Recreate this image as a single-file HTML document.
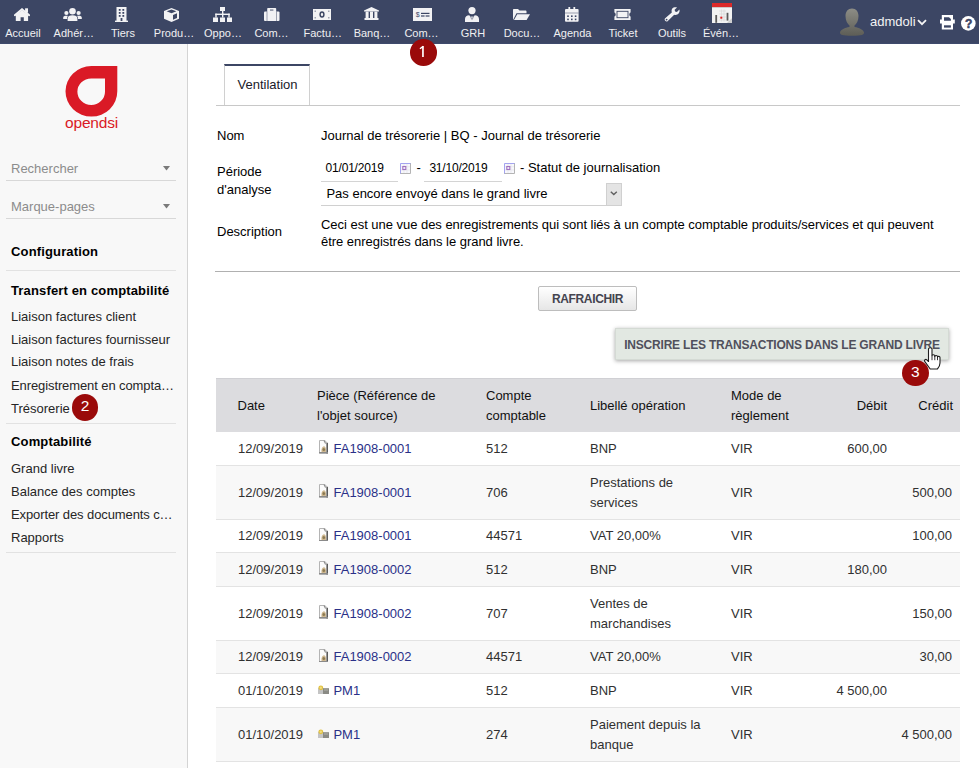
<!DOCTYPE html>
<html><head><meta charset="utf-8">
<style>
*{box-sizing:border-box;margin:0;padding:0}
html,body{width:979px;height:768px;overflow:hidden;background:#fff;font-family:"Liberation Sans",sans-serif;font-size:13px;color:#000}
.abs{position:absolute}
#top{position:absolute;left:0;top:0;width:979px;height:44px;background:#3c4664}
#side{position:absolute;left:0;top:44px;width:188px;height:724px;background:#f8f8f8;border-right:1px solid #d4d4d4}
.sl{position:absolute;left:11px;white-space:nowrap;line-height:16px;color:#262626}
.sb{font-weight:bold;color:#000;letter-spacing:0.15px}
.hr{position:absolute;left:6px;width:170px;height:1px;background:#e2e2e2}
.badge{position:absolute;width:26.5px;height:26.5px;border-radius:50%;background:#9a0a0a;color:#fff;font-size:15.5px;text-align:center;line-height:27px}
.lab{position:absolute;white-space:nowrap}
table.lst{position:absolute;left:216px;top:378px;width:744px;border-collapse:separate;border-spacing:0;table-layout:fixed}
table.lst th{background:#dcdcdf;box-shadow:inset 0 1px 0 #d0d0d4;font-weight:normal;text-align:left;line-height:20px;padding:8px 0 6px 8px;vertical-align:middle;color:#111}
table.lst td{line-height:20px;padding:6px 0 6px 8px;vertical-align:middle;border-bottom:1px solid #e3e3e3;color:#303030;white-space:nowrap}
table.lst tr.i td{background:#f8f8f8}
table.lst td.r,table.lst th.r{text-align:right;padding-left:0;padding-right:8px}
a{color:#2a3088;text-decoration:none}
.ico{display:inline-block;vertical-align:-1px;margin-right:5px}

.tml{position:absolute;top:27px;width:60px;text-align:center;color:#f0f0f2;font-size:11px;line-height:13px;white-space:nowrap}
.sg{color:#8c8c8c}
.btn{background:linear-gradient(#fff,#e6e6e6);border:1px solid #bdbdbd;border-radius:2px;font-weight:bold;font-size:12px;color:#44444f;text-align:center;line-height:25px;letter-spacing:-0.35px}
.btn2{background:#e2e8e2;border:1px solid #d4dad4;box-shadow:0 1px 4px rgba(0,0,0,0.35);font-weight:bold;font-size:12px;color:#50505c;text-align:center;line-height:32.5px;letter-spacing:-0.2px}

</style></head><body>
<div id="top"></div><div class="abs" style="left:0;top:43px;width:979px;height:1px;background:#3e4a6c"></div>
<div id="side"></div>
<div class="abs" style="left:14.0px;top:7.8px;line-height:0"><svg width="16" height="13" viewBox="0 0 16 13"><path d="M0.8 7.2 L8 1.2 L15.2 7.2" fill="none" stroke="#f2f2f4" stroke-width="1.9" stroke-linecap="round"/><rect x="11.1" y="0.3" width="2.9" height="4.4" fill="#f2f2f4"/><path d="M1.8 6.8 L8 2.3 L14.1 6.8 V13 H9.8 V9.2 H6.6 V13 H1.8 Z" fill="#f2f2f4"/></svg></div>
<div class="tml" style="left:-7.0px">Accueil</div>
<div class="abs" style="left:62.8px;top:8.2px;line-height:0"><svg width="19" height="13" viewBox="0 0 19 13"><circle cx="9.5" cy="3.3" r="3.3" fill="#f2f2f4"/><path d="M4.6 13 V10.4 C4.6 8 6.5 7.2 9.5 7.2 C12.5 7.2 14.4 8 14.4 10.4 V13 Z" fill="#f2f2f4"/><circle cx="3.4" cy="5" r="2.1" fill="#f2f2f4"/><path d="M0.2 11 V9.8 C0.2 8.4 1.4 7.8 3.4 7.8 C4.2 7.8 4.6 7.9 5 8 C4.2 8.8 4 9.6 4 10.5 V11 Z" fill="#f2f2f4"/><circle cx="15.6" cy="5" r="2.1" fill="#f2f2f4"/><path d="M18.8 11 V9.8 C18.8 8.4 17.6 7.8 15.6 7.8 C14.8 7.8 14.4 7.9 14 8 C14.8 8.8 15 9.6 15 10.5 V11 Z" fill="#f2f2f4"/></svg></div>
<div class="tml" style="left:43.8px">Adhér…</div>
<div class="abs" style="left:115.2px;top:6.9px;line-height:0"><svg width="13" height="15" viewBox="0 0 13 15"><rect x="1.5" y="0" width="10" height="14" fill="#f2f2f4"/><rect x="0" y="13.6" width="13" height="1.4" fill="#f2f2f4"/><g fill="#3c4664"><rect x="3.8" y="2" width="1.8" height="1.8"/><rect x="7.4" y="2" width="1.8" height="1.8"/><rect x="3.8" y="5" width="1.8" height="1.8"/><rect x="7.4" y="5" width="1.8" height="1.8"/><rect x="3.8" y="8" width="1.8" height="1.8"/><rect x="7.4" y="8" width="1.8" height="1.8"/><rect x="5.6" y="11" width="1.8" height="3"/></g></svg></div>
<div class="tml" style="left:93.0px">Tiers</div>
<div class="abs" style="left:164.4px;top:7.8px;line-height:0"><svg width="15" height="14" viewBox="0 0 15 14"><path d="M7.5 0 L15 3 V10.8 L7.5 14 L0 10.8 V3 Z" fill="#f2f2f4"/><path d="M2.6 3.3 L7.5 1.5 L12.4 3.3 L7.5 5.2 Z" fill="#3c4664"/><path d="M9 7 L13 5.3 V10 L9 11.8 Z" fill="#3c4664"/></svg></div>
<div class="tml" style="left:144.0px">Produ…</div>
<div class="abs" style="left:212.8px;top:6.9px;line-height:0"><svg width="19" height="15" viewBox="0 0 19 15"><rect x="7" y="0" width="5" height="4" fill="#f2f2f4"/><rect x="9" y="4" width="1.4" height="3" fill="#f2f2f4"/><rect x="2.3" y="6.6" width="14.4" height="1.4" fill="#f2f2f4"/><rect x="2.3" y="6.6" width="1.4" height="4" fill="#f2f2f4"/><rect x="15.3" y="6.6" width="1.4" height="4" fill="#f2f2f4"/><rect x="9" y="6.6" width="1.4" height="4" fill="#f2f2f4"/><rect x="0" y="10.5" width="5" height="4.5" fill="#f2f2f4"/><rect x="7" y="10.5" width="5" height="4.5" fill="#f2f2f4"/><rect x="14" y="10.5" width="5" height="4.5" fill="#f2f2f4"/></svg></div>
<div class="tml" style="left:193.0px">Oppo…</div>
<div class="abs" style="left:264.0px;top:7.8px;line-height:0"><svg width="16" height="13" viewBox="0 0 16 13"><rect x="0" y="3.5" width="15.5" height="9.5" rx="1" fill="#f2f2f4"/><rect x="3.2" y="0" width="9" height="13" rx="0.8" fill="#f2f2f4"/><rect x="6" y="1.6" width="3.4" height="0.9" fill="#3c4664"/><rect x="2.6" y="3.5" width="0.8" height="9.5" fill="#3c4664" opacity="0.6"/><rect x="12.1" y="3.5" width="0.8" height="9.5" fill="#3c4664" opacity="0.6"/></svg></div>
<div class="tml" style="left:241.5px">Com…</div>
<div class="abs" style="left:312.8px;top:9.0px;line-height:0"><svg width="18" height="11" viewBox="0 0 18 11"><rect x="0" y="0" width="18" height="11" fill="#f2f2f4"/><ellipse cx="9" cy="5.5" rx="2.6" ry="3.2" fill="#3c4664"/><ellipse cx="9" cy="5.5" rx="1.1" ry="1.7" fill="#f2f2f4"/><rect x="1.6" y="1.6" width="1.2" height="1.2" fill="#3c4664" opacity="0.7"/><rect x="15.2" y="1.6" width="1.2" height="1.2" fill="#3c4664" opacity="0.7"/><rect x="1.6" y="8.2" width="1.2" height="1.2" fill="#3c4664" opacity="0.7"/><rect x="15.2" y="8.2" width="1.2" height="1.2" fill="#3c4664" opacity="0.7"/></svg></div>
<div class="tml" style="left:292.8px">Factu…</div>
<div class="abs" style="left:364.2px;top:7.4px;line-height:0"><svg width="15" height="13" viewBox="0 0 15 13"><path d="M0 3.6 L7.5 0 L15 3.6 V4.6 H0 Z" fill="#f2f2f4"/><rect x="1.6" y="4.6" width="3" height="7" fill="#f2f2f4"/><rect x="6" y="4.6" width="3" height="7" fill="#f2f2f4"/><rect x="10.4" y="4.6" width="3" height="7" fill="#f2f2f4"/><rect x="0.5" y="11" width="14" height="2" fill="#f2f2f4"/></svg></div>
<div class="tml" style="left:342.0px">Banq…</div>
<div class="abs" style="left:412.5px;top:7.8px;line-height:0"><svg width="19" height="13" viewBox="0 0 19 13"><rect x="0" y="0" width="19" height="13" fill="#f2f2f4"/><text x="4.6" y="9.2" font-size="7" text-anchor="middle" fill="#3c4664" font-family="Liberation Sans">$</text><rect x="8" y="4.8" width="8.5" height="1.2" fill="#3c4664"/><rect x="8" y="7.4" width="3.6" height="1.2" fill="#3c4664"/><rect x="12.6" y="7.4" width="3.9" height="1.2" fill="#3c4664"/></svg></div>
<div class="tml" style="left:391.5px">Com…</div>
<div class="abs" style="left:465.0px;top:6.9px;line-height:0"><svg width="14" height="15" viewBox="0 0 14 15"><circle cx="7" cy="3.6" r="3.6" fill="#f2f2f4"/><path d="M0 15 V12 C0 9.6 1.8 8.2 4.2 8.2 L7 11 L9.8 8.2 C12.2 8.2 14 9.6 14 12 V15 Z" fill="#f2f2f4"/><path d="M6.2 9.4 H7.8 L8.3 15 H5.7 Z" fill="#f2f2f4"/><path d="M4.6 8.6 L6.6 13.2 L7 11 Z M9.4 8.6 L7.4 13.2 L7 11 Z" fill="#3c4664" opacity="0.5"/></svg></div>
<div class="tml" style="left:443.0px">GRH</div>
<div class="abs" style="left:513.4px;top:9.0px;line-height:0"><svg width="17" height="11" viewBox="0 0 17 11"><path d="M0 11 V1 C0 0.4 0.4 0 1 0 H5 L6.5 1.6 H12.5 C13.1 1.6 13.5 2 13.5 2.6 V4.2 H3.5 L0 11 Z" fill="#f2f2f4"/><path d="M1 11 L4.2 5.2 H17 L13.6 11 Z" fill="#f2f2f4"/></svg></div>
<div class="tml" style="left:492.0px">Docu…</div>
<div class="abs" style="left:564.7px;top:7.0px;line-height:0"><svg width="14" height="15" viewBox="0 0 14 15"><rect x="0" y="2" width="13.6" height="12.8" rx="1" fill="#f2f2f4"/><rect x="3.4" y="0" width="1.8" height="3" fill="#f2f2f4"/><rect x="8.4" y="0" width="1.8" height="3" fill="#f2f2f4"/><rect x="0" y="5.6" width="13.6" height="0.8" fill="#3c4664" opacity="0.6"/><g fill="#3c4664"><rect x="2.2" y="8.4" width="1.6" height="1.6"/><rect x="6" y="8.4" width="1.6" height="1.6"/><rect x="9.8" y="8.4" width="1.6" height="1.6"/><rect x="2.2" y="11.6" width="1.6" height="1.6"/><rect x="6" y="11.6" width="1.6" height="1.6"/><rect x="9.8" y="11.6" width="1.6" height="1.6"/></g></svg></div>
<div class="tml" style="left:542.5px">Agenda</div>
<div class="abs" style="left:613.5px;top:9.0px;line-height:0"><svg width="17" height="11" viewBox="0 0 17 11"><path d="M0.4 0 H16.6 V3.4 C15.8 3.6 15.3 4.5 15.3 5.5 C15.3 6.5 15.8 7.4 16.6 7.6 V11 H0.4 V7.6 C1.2 7.4 1.7 6.5 1.7 5.5 C1.7 4.5 1.2 3.6 0.4 3.4 Z" fill="#f2f2f4"/><rect x="3" y="2.3" width="11" height="6.4" fill="none" stroke="#3c4664" stroke-width="0.9"/></svg></div>
<div class="tml" style="left:593.0px">Ticket</div>
<div class="abs" style="left:663.9px;top:6.9px;line-height:0"><svg width="16" height="15" viewBox="0 0 16 15"><path d="M1.2 13.8 C0.4 13 0.5 12 1.2 11.3 L7.8 5.4 C7.2 3.4 7.8 1.5 9.6 0.6 C10.7 0.1 11.9 0 13 0.4 L10.6 2.8 L11.1 4.6 L12.9 5.1 L15.4 2.6 C15.8 3.8 15.6 5.2 14.8 6.3 C13.7 7.8 11.8 8.3 10.2 7.8 L3.8 14 C3 14.8 2 14.6 1.2 13.8 Z" fill="#f2f2f4"/><circle cx="2.6" cy="12.6" r="0.9" fill="#3c4664"/></svg></div>
<div class="tml" style="left:642.0px">Outils</div>
<div class="abs" style="left:712.0px;top:3.0px;line-height:0"><svg width="20" height="20" viewBox="0 0 20 20"><rect x="0" y="0" width="20" height="20" fill="#f2f2f2"/><rect x="0" y="0" width="20" height="4.2" fill="#dc2a2a"/><rect x="0" y="4.2" width="20" height="0.8" fill="#c8c8c8"/><path d="M7 8 H14 M7 11 H14 M7 14 H14 M7 17 H14 M9.5 6.5 V18.5 M12 6.5 V18.5" stroke="#dadada" stroke-width="0.7"/><rect x="3.3" y="12" width="1.8" height="7.8" fill="#5a5a5a"/><rect x="14.6" y="9.8" width="1.8" height="7.8" fill="#5a5a5a"/><rect x="8.3" y="13.7" width="2" height="2" fill="#e02020"/><path d="M15.5 20 L20 15.5 V20 Z" fill="#d0d0d0"/><path d="M15.5 20 L20 15.5" stroke="#bbb" stroke-width="0.6"/></svg></div>
<div class="tml" style="left:691.0px">Évén…</div>
<svg class="abs" style="left:839px;top:8px" width="26" height="28" viewBox="0 0 26 28"><defs><linearGradient id="av" x1="0" y1="0" x2="0" y2="1"><stop offset="0" stop-color="#8d8d86"/><stop offset="1" stop-color="#5d5d56"/></linearGradient></defs><path d="M13 0.5 C17 0.5 19.5 3.5 19.5 8 C19.5 12.5 17.5 16 15.5 17.5 L15.5 19 C20 19.8 24.5 21.5 25 24.5 C25.3 26.5 23 27.8 13 27.8 C3 27.8 0.7 26.5 1 24.5 C1.5 21.5 6 19.8 10.5 19 L10.5 17.5 C8.5 16 6.5 12.5 6.5 8 C6.5 3.5 9 0.5 13 0.5 Z" fill="url(#av)"/></svg>
<div class="abs" style="left:870px;top:14px;color:#f4f4f4;font-size:13px;line-height:16px">admdoli</div>
<svg class="abs" style="left:917px;top:19px" width="10" height="7" viewBox="0 0 10 7"><path d="M1 1.2 L5 5.2 L9 1.2" fill="none" stroke="#f4f4f4" stroke-width="1.8"/></svg>
<svg class="abs" style="left:940px;top:15.2px" width="15" height="15" viewBox="0 0 15 15"><path d="M1.8 0 H13 V4.5 H14.8 V8.6 H13 V14.6 H1.8 V8.6 H0 V4.5 H1.8 Z" fill="#fff"/><path d="M4 2.2 H9 L10.9 4 V5.8 H4 Z" fill="#3c4664"/><rect x="4" y="10.3" width="6.9" height="2.3" fill="#3c4664"/></svg>
<svg class="abs" style="left:960.8px;top:16.1px" width="15" height="15" viewBox="0 0 15 15"><circle cx="7.3" cy="7.4" r="7.3" fill="#fff"/><text x="7.6" y="11.9" font-size="12" font-weight="bold" text-anchor="middle" fill="#3c4664" stroke="#3c4664" stroke-width="0.5" font-family="Liberation Sans">?</text></svg>

<div class="sl sg" style="top:160.8px">Rechercher</div>
<div class="sl sg" style="top:198.5px">Marque-pages</div>
<div class="sl sb" style="top:244.0px">Configuration</div>
<div class="sl sb" style="top:282.5px">Transfert en comptabilité</div>
<div class="sl" style="top:308.5px">Liaison factures client</div>
<div class="sl" style="top:332.0px">Liaison factures fournisseur</div>
<div class="sl" style="top:354.3px">Liaison notes de frais</div>
<div class="sl" style="top:378.2px;letter-spacing:-0.1px">Enregistrement en compta…</div>
<div class="sl" style="top:401.2px">Trésorerie</div>
<div class="sl sb" style="top:434.0px">Comptabilité</div>
<div class="sl" style="top:460.9px">Grand livre</div>
<div class="sl" style="top:483.8px">Balance des comptes</div>
<div class="sl" style="top:506.5px;letter-spacing:-0.1px">Exporter des documents c…</div>
<div class="sl" style="top:530.1px">Rapports</div>
<div class="hr" style="top:180px;background:#d8d8d8"></div>
<div class="hr" style="top:218px;background:#d8d8d8"></div>
<div class="hr" style="top:270px"></div>
<div class="hr" style="top:423px"></div>
<div class="hr" style="top:552px"></div>
<svg class="abs" style="left:162.7px;top:166px" width="7" height="5" viewBox="0 0 7 5"><path d="M0 0 H7 L3.5 4.6 Z" fill="#7a7a7a"/></svg>
<svg class="abs" style="left:162.7px;top:204.2px" width="7" height="5" viewBox="0 0 7 5"><path d="M0 0 H7 L3.5 4.6 Z" fill="#7a7a7a"/></svg><svg class="abs" style="left:60px;top:60px" width="64" height="76" viewBox="60 60 64 76"><path fill-rule="evenodd" fill="#da1a26" d="M117.3 66 V91.2 A25.9 25.3 0 1 1 91.4 66 Z M105 78.4 V91.7 A13.8 13.3 0 1 1 91.2 78.4 Z"/></svg>
<div class="abs" style="left:64px;top:114.3px;width:55px;text-align:center;color:#da1a26;font-size:15.5px;line-height:18px;letter-spacing:-0.2px">opendsi</div>

<div class="abs" style="left:224px;top:63.5px;width:86px;height:42px;border:1px solid #d0d0d0;border-top:2px solid #3c4664;border-bottom:none;background:#fff"></div>
<div class="abs" style="left:216px;top:105px;width:744px;height:1px;background:#c8c8c8"></div>
<div class="abs" style="left:237.5px;top:76.5px;line-height:16px;color:#1a1a2a">Ventilation</div>
<div class="lab" style="left:217px;top:127.5px;line-height:16px">Nom</div>
<div class="lab" style="left:321px;top:127.5px;line-height:16px">Journal de trésorerie | BQ - Journal de trésorerie</div>
<div class="lab" style="left:217px;top:162.7px;line-height:18px">Période<br>d'analyse</div>
<div class="lab" style="left:325.6px;top:160.5px;line-height:15px;font-size:12px;letter-spacing:-0.2px">01/01/2019</div>
<div class="abs" style="left:321px;top:181px;width:77px;height:1px;background:#d4d4d4"></div>
<div class="abs" style="left:400px;top:163px;line-height:0"><svg width="11" height="11" viewBox="0 0 11 11"><rect x="0" y="0" width="11" height="11" fill="#f8f8fc"/><path d="M0.5 11 V0.5 H11" fill="none" stroke="#a4a4f0" stroke-width="1"/><path d="M0.5 10.5 H10.5 V0.5" fill="none" stroke="#b4b4b4" stroke-width="1"/><path d="M1 3.7 H10 M1 7 H10 M4 1 V10 M7 1 V10" stroke="#e4e4ea" stroke-width="0.7"/><rect x="2.8" y="3.5" width="3" height="3" fill="none" stroke="#a070c0" stroke-width="1.1"/></svg></div>
<div class="lab" style="left:416.5px;top:160px;line-height:16px">-</div>
<div class="lab" style="left:429.4px;top:160.5px;line-height:15px;font-size:12px;letter-spacing:-0.2px">31/10/2019</div>
<div class="abs" style="left:424px;top:181px;width:78px;height:1px;background:#d4d4d4"></div>
<div class="abs" style="left:503.7px;top:163px;line-height:0"><svg width="11" height="11" viewBox="0 0 11 11"><rect x="0" y="0" width="11" height="11" fill="#f8f8fc"/><path d="M0.5 11 V0.5 H11" fill="none" stroke="#a4a4f0" stroke-width="1"/><path d="M0.5 10.5 H10.5 V0.5" fill="none" stroke="#b4b4b4" stroke-width="1"/><path d="M1 3.7 H10 M1 7 H10 M4 1 V10 M7 1 V10" stroke="#e4e4ea" stroke-width="0.7"/><rect x="2.8" y="3.5" width="3" height="3" fill="none" stroke="#a070c0" stroke-width="1.1"/></svg></div>
<div class="lab" style="left:520px;top:160px;line-height:16px">- Statut de journalisation</div>
<div class="lab" style="left:326.4px;top:186.2px;line-height:16px">Pas encore envoyé dans le grand livre</div>
<div class="abs" style="left:321px;top:205px;width:301px;height:1px;background:#d0d0d0"></div>
<div class="abs" style="left:606px;top:183px;width:16px;height:22.5px;background:#e4e4e4;border:1px solid #d0d0d0"></div>
<svg class="abs" style="left:610px;top:191.3px" width="8" height="5" viewBox="0 0 8 5"><path d="M0.8 0.8 L3.8 3.6 L6.8 0.8" fill="none" stroke="#606060" stroke-width="1.4"/></svg>
<div class="lab" style="left:217px;top:224.2px;line-height:16px">Description</div>
<div class="lab" style="left:321px;top:216px;line-height:17px;letter-spacing:-0.03px">Ceci est une vue des enregistrements qui sont liés à un compte comptable produits/services et qui peuvent<br>être enregistrés dans le grand livre.</div>
<div class="abs" style="left:215px;top:271px;width:745px;height:1px;background:#b0b0b0"></div>
<div class="abs btn" style="left:538px;top:286px;width:99px;height:25px">RAFRAICHIR</div>
<div class="abs btn2" style="left:615px;top:328.3px;width:334px;height:32px">INSCRIRE LES TRANSACTIONS DANS LE GRAND LIVRE</div>
<table class="lst"><colgroup><col style="width:93px"><col style="width:169px"><col style="width:104px"><col style="width:141px"><col style="width:92px"><col style="width:80px"><col style="width:65px"></colgroup>
<tr><th style="padding-left:21.5px">Date</th><th>Pièce (Référence de<br>l'objet source)</th><th>Compte<br>comptable</th><th>Libellé opération</th><th>Mode de<br>règlement</th><th class="r">Débit</th><th class="r" style="padding-right:7px">Crédit</th></tr>
<tr style="height:34px"><td style="padding-left:22px">12/09/2019</td><td><svg class="ico" style="margin-left:1.5px;margin-right:6px;vertical-align:-1px" width="9" height="13.5" viewBox="0 0 9 13.5"><path d="M0.5 0.5 H5.8 L8.5 3.2 V13 H0.5 Z" fill="#fbfbfb" stroke="#b4b4b4" stroke-width="1"/><rect x="7.4" y="2.8" width="1.6" height="10.7" fill="#5a5a5a"/><path d="M5 0.6 L6.6 3.6" stroke="#888" stroke-width="1.1"/><path d="M2.6 12 C2 9.5 3 6.5 5 6.2 C6.8 6.5 7.3 9.5 6.8 12 Z" fill="#cdb68e"/><ellipse cx="4.8" cy="9.4" rx="1.3" ry="1.5" fill="#8c7a52"/><rect x="0" y="12" width="9" height="1.5" fill="#8a8a8a"/></svg><a>FA1908-0001</a></td><td>512</td><td>BNP</td><td>VIR</td><td class="r">600,00</td><td class="r"></td></tr>
<tr class="i" style="height:54px"><td style="padding-left:22px">12/09/2019</td><td><svg class="ico" style="margin-left:1.5px;margin-right:6px;vertical-align:-1px" width="9" height="13.5" viewBox="0 0 9 13.5"><path d="M0.5 0.5 H5.8 L8.5 3.2 V13 H0.5 Z" fill="#fbfbfb" stroke="#b4b4b4" stroke-width="1"/><rect x="7.4" y="2.8" width="1.6" height="10.7" fill="#5a5a5a"/><path d="M5 0.6 L6.6 3.6" stroke="#888" stroke-width="1.1"/><path d="M2.6 12 C2 9.5 3 6.5 5 6.2 C6.8 6.5 7.3 9.5 6.8 12 Z" fill="#cdb68e"/><ellipse cx="4.8" cy="9.4" rx="1.3" ry="1.5" fill="#8c7a52"/><rect x="0" y="12" width="9" height="1.5" fill="#8a8a8a"/></svg><a>FA1908-0001</a></td><td>706</td><td>Prestations de<br>services</td><td>VIR</td><td class="r"></td><td class="r">500,00</td></tr>
<tr style="height:33px"><td style="padding-left:22px">12/09/2019</td><td><svg class="ico" style="margin-left:1.5px;margin-right:6px;vertical-align:-1px" width="9" height="13.5" viewBox="0 0 9 13.5"><path d="M0.5 0.5 H5.8 L8.5 3.2 V13 H0.5 Z" fill="#fbfbfb" stroke="#b4b4b4" stroke-width="1"/><rect x="7.4" y="2.8" width="1.6" height="10.7" fill="#5a5a5a"/><path d="M5 0.6 L6.6 3.6" stroke="#888" stroke-width="1.1"/><path d="M2.6 12 C2 9.5 3 6.5 5 6.2 C6.8 6.5 7.3 9.5 6.8 12 Z" fill="#cdb68e"/><ellipse cx="4.8" cy="9.4" rx="1.3" ry="1.5" fill="#8c7a52"/><rect x="0" y="12" width="9" height="1.5" fill="#8a8a8a"/></svg><a>FA1908-0001</a></td><td>44571</td><td>VAT 20,00%</td><td>VIR</td><td class="r"></td><td class="r">100,00</td></tr>
<tr class="i" style="height:34px"><td style="padding-left:22px">12/09/2019</td><td><svg class="ico" style="margin-left:1.5px;margin-right:6px;vertical-align:-1px" width="9" height="13.5" viewBox="0 0 9 13.5"><path d="M0.5 0.5 H5.8 L8.5 3.2 V13 H0.5 Z" fill="#fbfbfb" stroke="#b4b4b4" stroke-width="1"/><rect x="7.4" y="2.8" width="1.6" height="10.7" fill="#5a5a5a"/><path d="M5 0.6 L6.6 3.6" stroke="#888" stroke-width="1.1"/><path d="M2.6 12 C2 9.5 3 6.5 5 6.2 C6.8 6.5 7.3 9.5 6.8 12 Z" fill="#cdb68e"/><ellipse cx="4.8" cy="9.4" rx="1.3" ry="1.5" fill="#8c7a52"/><rect x="0" y="12" width="9" height="1.5" fill="#8a8a8a"/></svg><a>FA1908-0002</a></td><td>512</td><td>BNP</td><td>VIR</td><td class="r">180,00</td><td class="r"></td></tr>
<tr style="height:54px"><td style="padding-left:22px">12/09/2019</td><td><svg class="ico" style="margin-left:1.5px;margin-right:6px;vertical-align:-1px" width="9" height="13.5" viewBox="0 0 9 13.5"><path d="M0.5 0.5 H5.8 L8.5 3.2 V13 H0.5 Z" fill="#fbfbfb" stroke="#b4b4b4" stroke-width="1"/><rect x="7.4" y="2.8" width="1.6" height="10.7" fill="#5a5a5a"/><path d="M5 0.6 L6.6 3.6" stroke="#888" stroke-width="1.1"/><path d="M2.6 12 C2 9.5 3 6.5 5 6.2 C6.8 6.5 7.3 9.5 6.8 12 Z" fill="#cdb68e"/><ellipse cx="4.8" cy="9.4" rx="1.3" ry="1.5" fill="#8c7a52"/><rect x="0" y="12" width="9" height="1.5" fill="#8a8a8a"/></svg><a>FA1908-0002</a></td><td>707</td><td>Ventes de<br>marchandises</td><td>VIR</td><td class="r"></td><td class="r">150,00</td></tr>
<tr class="i" style="height:33px"><td style="padding-left:22px">12/09/2019</td><td><svg class="ico" style="margin-left:1.5px;margin-right:6px;vertical-align:-1px" width="9" height="13.5" viewBox="0 0 9 13.5"><path d="M0.5 0.5 H5.8 L8.5 3.2 V13 H0.5 Z" fill="#fbfbfb" stroke="#b4b4b4" stroke-width="1"/><rect x="7.4" y="2.8" width="1.6" height="10.7" fill="#5a5a5a"/><path d="M5 0.6 L6.6 3.6" stroke="#888" stroke-width="1.1"/><path d="M2.6 12 C2 9.5 3 6.5 5 6.2 C6.8 6.5 7.3 9.5 6.8 12 Z" fill="#cdb68e"/><ellipse cx="4.8" cy="9.4" rx="1.3" ry="1.5" fill="#8c7a52"/><rect x="0" y="12" width="9" height="1.5" fill="#8a8a8a"/></svg><a>FA1908-0002</a></td><td>44571</td><td>VAT 20,00%</td><td>VIR</td><td class="r"></td><td class="r">30,00</td></tr>
<tr style="height:34px"><td style="padding-left:22px">01/10/2019</td><td><svg class="ico" width="11" height="10" viewBox="0 0 11 10" style="vertical-align:0;margin-left:1px;margin-right:4.4px"><rect x="0" y="3" width="6" height="6" fill="#c4c4c4"/><rect x="5" y="3.2" width="6" height="5.8" fill="#8a8a84"/><rect x="6" y="4.5" width="4" height="1" fill="#b0b0a8"/><circle cx="2.8" cy="2.8" r="2.4" fill="#e0c040"/><circle cx="2.8" cy="2.8" r="1.2" fill="#f0dc80"/></svg><a>PM1</a></td><td>512</td><td>BNP</td><td>VIR</td><td class="r">4 500,00</td><td class="r"></td></tr>
<tr class="i" style="height:54px"><td style="padding-left:22px">01/10/2019</td><td><svg class="ico" width="11" height="10" viewBox="0 0 11 10" style="vertical-align:0;margin-left:1px;margin-right:4.4px"><rect x="0" y="3" width="6" height="6" fill="#c4c4c4"/><rect x="5" y="3.2" width="6" height="5.8" fill="#8a8a84"/><rect x="6" y="4.5" width="4" height="1" fill="#b0b0a8"/><circle cx="2.8" cy="2.8" r="2.4" fill="#e0c040"/><circle cx="2.8" cy="2.8" r="1.2" fill="#f0dc80"/></svg><a>PM1</a></td><td>274</td><td>Paiement depuis la<br>banque</td><td>VIR</td><td class="r"></td><td class="r">4 500,00</td></tr></table>
<div class="badge" style="left:410px;top:39px"><svg width="26.5" height="26.5" viewBox="0.25 0.25 26.5 26.5" style="position:absolute;left:0;top:0"><path d="M13.2 7.3 V18.3" stroke="#fff" stroke-width="1.7"/><path d="M13.4 7.6 L10.2 10" stroke="#fff" stroke-width="1.4"/></svg></div>
<div class="badge" style="left:71.9px;top:394.2px;line-height:24.5px">2</div>
<div class="badge" style="left:902px;top:359.9px;line-height:24.5px">3</div>
<svg class="abs" style="left:922.5px;top:346.5px" width="18" height="23" viewBox="0 0 18 23"><path d="M5.5 2 C5.5 0.4 9 0.4 9 2 V8.6 C9 7.4 11.8 7.4 11.8 8.8 V9.4 C11.8 8.2 14.5 8.2 14.5 9.6 V10.2 C14.5 9 17 9 17 10.5 V16 C17 18.5 15.8 20.5 14.4 22 H7.2 L1.7 14.4 C0.9 13.2 2.6 11.7 3.8 12.8 L5.5 14.5 Z" fill="#fff" stroke="#1e1e1e" stroke-width="1.1" stroke-linejoin="round"/><path d="M9 8.6 V13.2 M11.8 9 V13.2 M14.5 9.8 V13.2" stroke="#1e1e1e" stroke-width="0.9"/></svg>

</body></html>
